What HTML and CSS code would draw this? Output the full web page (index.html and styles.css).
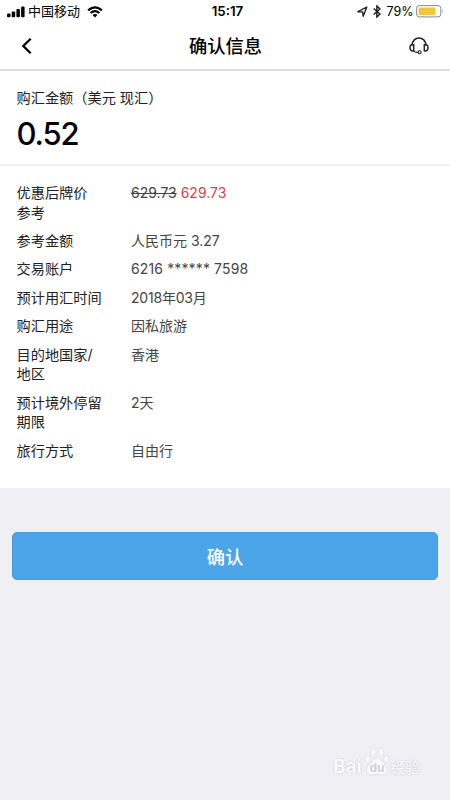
FILE: index.html
```html
<!DOCTYPE html>
<html lang="zh-CN">
<head>
<meta charset="utf-8">
<meta name="viewport" content="width=device-width, initial-scale=1">
<title>确认信息</title>
<link rel="stylesheet" href="styles.css">
</head>
<body>
<div class="status">
  <div class="status-left">
    <svg class="signal" width="18" height="12" viewBox="0 0 18 12"><rect x="0" y="7.6" width="3.5" height="3.6" rx="1"/><rect x="4.7" y="5.6" width="3.5" height="5.6" rx="1"/><rect x="9.4" y="3" width="3.5" height="8.2" rx="1"/><rect x="14.1" y="0.4" width="3.5" height="10.8" rx="1"/></svg>
    <span class="carrier">中国移动</span>
    <svg class="wifi" width="16" height="12" viewBox="0 0 16 12"><path d="M1.1 4.4Q8-1.7 14.9 4.4M3.6 7Q8 3.3 12.4 7" fill="none" stroke="#000" stroke-width="2.1"/><path d="M5.5 9Q8 7.1 10.500 9L8 11.400Z"/></svg>
  </div>
  <div class="time">15:17</div>
  <div class="status-right">
    <svg class="location" width="11" height="12" viewBox="0 0 11 12"><path d="M.9 5.700L9.800 1L6.200 10.300L5.600 5.900Z" fill="none" stroke="#222" stroke-width="1.400" stroke-linejoin="round"/></svg>
    <svg class="bluetooth" width="8" height="13" viewBox="0 0 8 13"><path d="M.7 3.500L7 9L3.900 12V1L7 4L.7 9.500" fill="none" stroke="#222" stroke-width="1.500"/></svg>
    <span class="percent">79%</span>
    <svg class="battery" width="28" height="13" viewBox="0 0 28 13"><rect x=".6" y=".6" width="24.200" height="11.300" rx="2.700" fill="none" stroke="#888" stroke-width="1"/><rect x="2.500" y="2.400" width="17" height="7.700" rx="1" fill="#f2c63d"/><path d="M26 4.300Q27.800 6.200 26 8.200Z" fill="#999"/></svg>
  </div>
</div>
<header class="nav">
  <svg class="back" width="12" height="18" viewBox="0 0 12 18"><path d="M9.700 1.700L2.300 9L9.700 16.300" fill="none" stroke="#000" stroke-width="2.300"/></svg>
  <h1>确认信息</h1>
  <svg class="headset" width="20" height="18" viewBox="0 0 20 18"><g fill="none" stroke="#222" stroke-width="1.500"><path d="M3 8.500C3.200-1.500 16.800-1.500 17 8.500"/><path d="M4.700 7.700C2.300 7 1 8.400 1 10.700s1.300 3.700 3.700 3zM15.300 7.700c2.400-.7 3.700.7 3.700 3s-1.300 3.700-3.700 3z"/><path d="M4.300 13.800Q6 15.500 9 15.300" stroke-width="1.200"/><circle cx="10.600" cy="15.200" r="1.500" stroke-width="1.100"/></g></svg>
</header>
<section class="amount">
  <div class="amount-label">购汇金额（美元 现汇）</div>
  <div class="amount-value">0.52</div>
</section>
<dl class="details">
  <dt>优惠后牌价<br>参考</dt><dd><del>629.73</del> <span class="rate">629.73</span></dd>
  <dt>参考金额</dt><dd>人民币元 3.27</dd>
  <dt>交易账户</dt><dd class="account">6216 ****** 7598</dd>
  <dt>预计用汇时间</dt><dd class="month">2018年03月</dd>
  <dt>购汇用途</dt><dd>因私旅游</dd>
  <dt>目的地国家/<br>地区</dt><dd>香港</dd>
  <dt>预计境外停留<br>期限</dt><dd>2天</dd>
  <dt>旅行方式</dt><dd>自由行</dd>
</dl>
<div class="action"><button class="confirm" type="button">确认</button></div>
<div class="watermark">
  <span class="wm-latin">Bai</span>
  <svg width="26" height="30" viewBox="0 0 26 30"><g fill="#fbfbfe" stroke="#d6d6dc" stroke-width=".7"><ellipse cx="3.600" cy="12" rx="2.700" ry="3.700"/><ellipse cx="9.300" cy="5.300" rx="2.700" ry="4"/><ellipse cx="17" cy="5.300" rx="2.700" ry="4"/><ellipse cx="22.400" cy="12" rx="2.700" ry="3.700"/><path d="M13 11C9 11 8.500 15 5 18C1 21.500 2 28 7 28Q13 27 19 28C24 28 25 21.500 21 18C17.500 15 17 11 13 11Z"/></g><text x="13" y="25" text-anchor="middle" class="wm-du">du</text></svg>
  <span class="wm-cjk">经验</span>
</div>
</body>
</html>
```

FILE: styles.css
```css
* { box-sizing: border-box; }
body {
  margin: 0;
  width: 450px;
  height: 800px;
  overflow: hidden;
  position: relative;
  background: #efeff4;
  color: #222;
  font-family: Inter, "Noto Sans CJK SC", sans-serif;
}
svg { display: block; flex: none; }
.status {
  height: 23px;
  padding: 0 6px 0 7px;
  background: #fff;
  display: grid;
  grid-template-columns: 1fr auto 1fr;
  align-items: center;
  color: #000;
}
.status-left, .status-right { display: flex; align-items: center; }
.status-right { justify-content: flex-end; }
.carrier { margin: 0 7px 0 3px; font-size: 13px; line-height: 23px; }
.time { font-size: 13.3px; font-weight: 600; line-height: 23px; padding-left: 4px; }
.bluetooth { margin: 0 6px 0 5px; }
.percent { margin-right: 2.5px; font-size: 12.5px; }
.nav {
  height: 48px;
  padding: 0 21px;
  background: #fff;
  border-bottom: 2px solid #dedede;
  display: flex;
  align-items: center;
  justify-content: space-between;
}
.nav h1 { margin: 0 0 0 9px; font-size: 18.3px; font-weight: 500; line-height: 46px; color: #000; }
.amount {
  height: 95px;
  padding: 17px 16.500px 0;
  background: #fff;
  border-bottom: 2px solid #f1f1f3;
}
.amount-label { font-size: 14.200px; line-height: 20px; }
.amount-value { margin-top: 7px; font-size: 31px; font-weight: 500; line-height: 38px; letter-spacing: -1.1px; color: #000; }
.details {
  height: 322px;
  margin: 0;
  padding: 17px 16.500px 0;
  background: #fff;
  display: grid;
  grid-template-columns: 114.500px 1fr;
  row-gap: 8.800px;
  align-content: start;
  font-size: 14.200px;
  line-height: 19.600px;
}
.details dd { margin: 0; color: #444; font-size: 14px; }
.details .account { letter-spacing: 0.13px; }
.details .month { letter-spacing: -0.2px; }
.rate { color: #d8434b; }
.action { padding: 44px 12px 0; }
.confirm {
  display: block;
  width: 426px;
  height: 48px;
  padding: 0;
  border: 1px solid #459bdc;
  border-radius: 5px;
  background: #4ba5e8;
  color: #fff;
  font: 500 18.300px Inter, "Noto Sans CJK SC", sans-serif;
}
.watermark {
  position: absolute;
  left: 333px;
  top: 747px;
  display: flex;
  align-items: flex-end;
  color: #fbfbfe;
  text-shadow: 0 0 1.5px #b4b4bc;
}
.wm-latin { width: 31px; font-size: 19px; font-weight: 700; line-height: 20px; }
.wm-du { font: 700 12px Inter, sans-serif; fill: #d0d0d8; text-shadow: none; }
.wm-cjk { font-size: 15px; font-weight: 500; line-height: 19px; padding-bottom: 0; }
```
